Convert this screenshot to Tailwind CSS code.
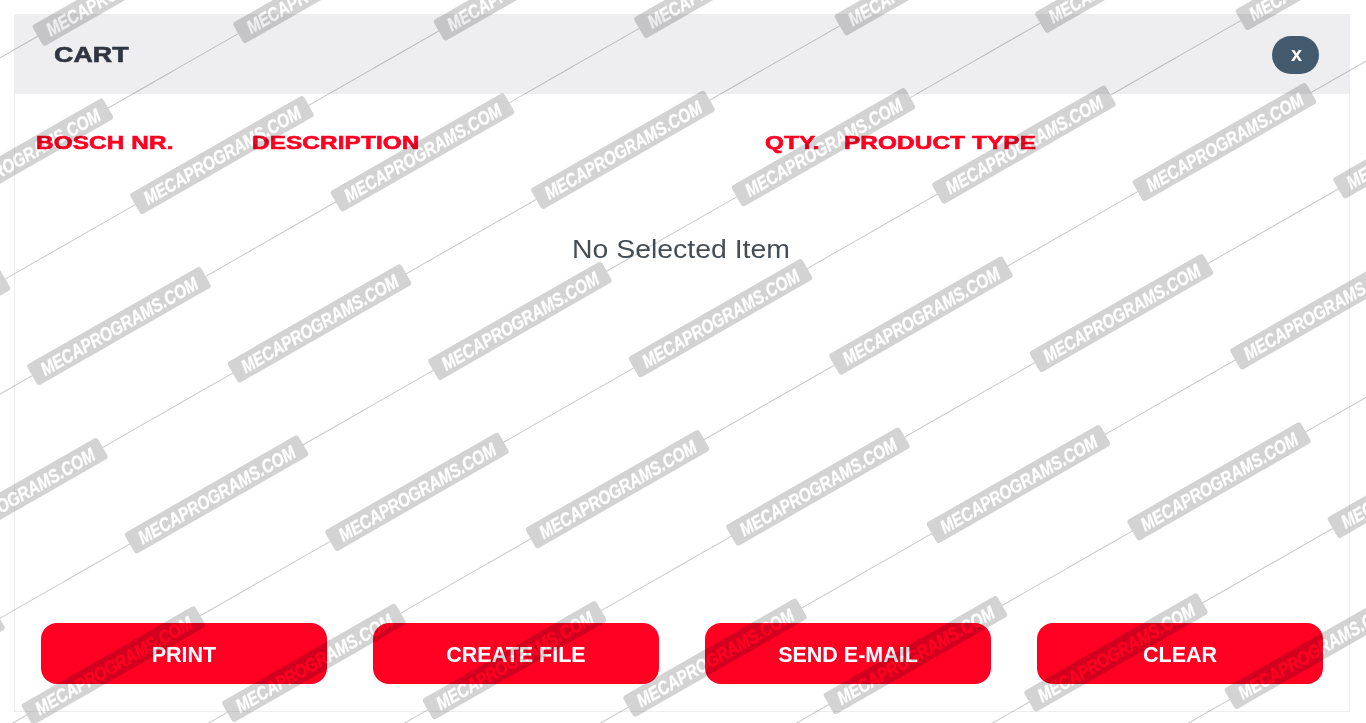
<!DOCTYPE html>
<html lang="en">
<head>
<meta charset="utf-8">
<title>Cart</title>
<script src="https://cdn.jsdelivr.net/npm/@tailwindcss/browser@4"></script>
</head>
<body class="bg-white">
<div class="relative w-[1366px] h-[723px] overflow-hidden p-[14px] font-['Liberation_Sans',Arial,sans-serif] bg-white">
  <div class="flex flex-col w-[1336px] h-[698px] border border-[#eeedf0]">
    <header class="flex items-center justify-between h-[80px] -mx-px -mt-px bg-[#eeedf0] pl-[40px] pr-[31px] shrink-0">
      <h1 class="origin-left scale-x-[1.22] mt-[1px] text-[22px] font-bold text-[#2f3640] [-webkit-text-stroke:0.6px_#2f3640]">CART</h1>
      <button class="flex items-center justify-center w-[47px] h-[38px] mt-[2px] rounded-full bg-[#43596e] text-white text-[20px] font-bold leading-none pb-[3px] pl-[2px]">x</button>
    </header>
    <div class="grid grid-cols-[216px_513px_79px_1fr] pl-[21px] pt-[38px] text-[18px] leading-[22px] font-bold tracking-[0.1px] text-[#ff0022] [-webkit-text-stroke:0.6px_#ff0022]">
      <div class="origin-left scale-x-[1.35]">BOSCH NR.</div>
      <div class="origin-left scale-x-[1.35]">DESCRIPTION</div>
      <div class="origin-left scale-x-[1.35]">QTY.</div>
      <div class="origin-left scale-x-[1.35]">PRODUCT TYPE</div>
    </div>
    <div class="flex-1 text-center pt-[80px] pr-[2px]">
      <p class="scale-x-[1.137] text-[25px] leading-[30px] text-[#454d55]">No Selected Item</p>
    </div>
    <footer class="grid grid-cols-4 gap-[46px] px-[26px] pb-[27px]">
      <button class="h-[61px] rounded-[16px] bg-[#ff0022] text-white text-[21.5px] font-bold pt-[3px]">PRINT</button>
      <button class="h-[61px] rounded-[16px] bg-[#ff0022] text-white text-[21.5px] font-bold pt-[3px]">CREATE FILE</button>
      <button class="h-[61px] rounded-[16px] bg-[#ff0022] text-white text-[21.5px] font-bold pt-[3px]">SEND E-MAIL</button>
      <button class="h-[61px] rounded-[16px] bg-[#ff0022] text-white text-[21.5px] font-bold pt-[3px]">CLEAR</button>
    </footer>
  </div>

  <svg class="absolute inset-0 pointer-events-none mix-blend-multiply" width="1366" height="723" viewBox="0 0 1366 723" aria-hidden="true">
    <defs>
      <g id="w" transform="rotate(-29.77)">
        <line x1="-175" y1="0" x2="175" y2="0" stroke="#c9c9c9" stroke-width="1"/>
        <rect x="-100" y="-12" width="200" height="24" rx="3" fill="#d3d3d3"/>
        <text x="0" y="7" text-anchor="middle" textLength="178" lengthAdjust="spacingAndGlyphs" font-size="19" font-weight="700" font-style="italic" fill="#ffffff" stroke="#ffffff" stroke-width="0.3" font-family="'Liberation Sans', Arial, sans-serif">MECAPROGRAMS.COM</text>
      </g>
    </defs>
    <use href="#w" x="124.5" y="-13.4"/><use href="#w" x="325" y="-16"/><use href="#w" x="525.5" y="-18.6"/><use href="#w" x="726" y="-21.2"/><use href="#w" x="926.5" y="-23.8"/><use href="#w" x="1127" y="-26.4"/><use href="#w" x="1327.5" y="-29"/>
    <use href="#w" x="21.5" y="157.6"/><use href="#w" x="222" y="155"/><use href="#w" x="422.5" y="152.4"/><use href="#w" x="623" y="149.8"/><use href="#w" x="823.5" y="147.2"/><use href="#w" x="1024" y="144.6"/><use href="#w" x="1224.5" y="142"/><use href="#w" x="1425" y="139.4"/>
    <use href="#w" x="-81.5" y="328.6"/><use href="#w" x="119" y="326"/><use href="#w" x="319.5" y="323.4"/><use href="#w" x="520" y="320.8"/><use href="#w" x="720.5" y="318.2"/><use href="#w" x="921" y="315.6"/><use href="#w" x="1121.5" y="313"/><use href="#w" x="1322" y="310.4"/>
    <use href="#w" x="16" y="497"/><use href="#w" x="216.5" y="494.4"/><use href="#w" x="417" y="491.8"/><use href="#w" x="617.5" y="489.2"/><use href="#w" x="818" y="486.6"/><use href="#w" x="1018.5" y="484"/><use href="#w" x="1219" y="481.4"/><use href="#w" x="1419.5" y="478.8"/>
    <use href="#w" x="-87" y="668"/><use href="#w" x="113.5" y="665.4"/><use href="#w" x="314" y="662.8"/><use href="#w" x="514.5" y="660.2"/><use href="#w" x="715" y="657.6"/><use href="#w" x="915.5" y="655"/><use href="#w" x="1116" y="652.4"/><use href="#w" x="1316.5" y="649.8"/>
  </svg>
</div>
</body>
</html>
